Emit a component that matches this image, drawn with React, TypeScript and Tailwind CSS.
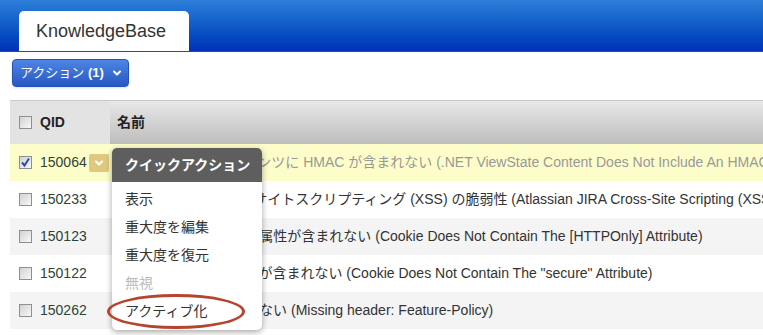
import React from "react";

const rows = [
  { id: "150064", checked: true, name: ".NET ViewStateコンテンツに HMAC が含まれない (.NET ViewState Content Does Not Include An HMAC)", dim: true },
  { id: "150233", name: "Atlassian JIRA クロスサイトスクリプティング (XSS) の脆弱性 (Atlassian JIRA Cross-Site Scripting (XSS) Vulnerability)" },
  { id: "150123", name: "Cookie に [HTTPOnly] 属性が含まれない (Cookie Does Not Contain The [HTTPOnly] Attribute)" },
  { id: "150122", name: "Cookieに \"secure\"属性が含まれない (Cookie Does Not Contain The \"secure\" Attribute)" },
  { id: "150262", name: "必須 HTTP ヘッダーがない (Missing header: Feature-Policy)" },
];

function Checkbox({ checked }: { checked?: boolean }) {
  return (
    <div className="w-[13px] h-[13px] shrink-0 border border-[#8f8f8f] bg-gradient-to-br from-[#d2d2d2] to-[#f8f8f8] flex items-center justify-center">
      {checked && (
        <svg width="11" height="11" viewBox="0 0 11 11">
          <path d="M2 5.5 L4.5 8.5 L9 1.5" stroke="#2b4fa8" strokeWidth="2" fill="none" />
        </svg>
      )}
    </div>
  );
}

function Chevron({ color = "#fff", size = 10 }: { color?: string; size?: number }) {
  return (
    <svg width={size} height={size} viewBox="0 0 10 10">
      <path d="M2 3.5 L5 6.5 L8 3.5" stroke={color} strokeWidth="2" fill="none" strokeLinecap="round" strokeLinejoin="round" />
    </svg>
  );
}

export default function App() {
  return (
    <div
      className="w-[763px] h-[335px] overflow-hidden bg-white relative"
      style={{ fontFamily: '"Liberation Sans", Arial, "Noto Sans CJK JP", sans-serif' }}
    >
      <div className="h-[52px] bg-gradient-to-b from-[#2d7fd9] to-[#0331b7] border-b border-[#1d4bb0] flex items-end pl-[19px]">
        <div className="w-[170px] h-[40px] bg-white rounded-t-[5px] pl-[17px] text-[18px] leading-[40px] text-[#333]">
          KnowledgeBase
        </div>
      </div>
      <div className="pt-[7px] pl-[12px]">
        <button className="w-[117px] h-[28px] rounded-[4px] border border-[#2553b5] bg-gradient-to-b from-[#4d86e3] to-[#2857c4] text-white text-[13px] flex items-center pl-[7px] gap-[8px] shadow-sm">
          <span>アクション <span className="font-bold">(1)</span></span>
          <Chevron />
        </button>
      </div>
      <div className="ml-[10px] mt-[13px] border-t border-[#c8c8c8]">
        <div className="flex h-[43px] text-[14px] font-bold text-[#222]">
          <div className="w-[100px] bg-[#e3e3e3] flex items-center pl-[9px] gap-[8px]">
            <Checkbox />
            <span>QID</span>
          </div>
          <div className="flex-1 bg-gradient-to-b from-[#e8e8e8] to-[#bdbdbd] flex items-center pl-[7px]">名前</div>
        </div>
        {rows.map((r, i) => (
          <div
            key={r.id}
            className={
              "flex h-[37px] items-center text-[14px] whitespace-nowrap " +
              (i === 0 ? "bg-[#fdfdc9]" : i % 2 === 0 ? "bg-[#f4f4f4]" : "bg-white")
            }
          >
            <div className="w-[100px] shrink-0 flex items-center pl-[9px] gap-[8px] text-[#2f4434]">
              <Checkbox checked={r.checked} />
              <span>{r.id}</span>
              {i === 0 && (
                <div className="w-[20px] h-[18px] -ml-[6px] rounded-[2px] bg-[#dfc97e] flex items-center justify-center">
                  <Chevron />
                </div>
              )}
            </div>
            <div className={"pl-[7px] " + (r.dim ? "text-[#999]" : "text-[#333]")}>{r.name}</div>
          </div>
        ))}
      </div>
      <div className="absolute left-[112px] top-[148px] w-[150px] h-[182px] bg-white rounded-[5px] shadow-[0_2px_6px_rgba(0,0,0,0.35)]">
        <div className="h-[34px] bg-[#5e5e5e] rounded-t-[5px] text-white font-bold text-[14px] flex items-center pl-[13px]">
          クイックアクション
        </div>
        <div className="pt-[3px] text-[14px] text-[#333]">
          <div className="h-[28px] flex items-center pl-[13px]">表示</div>
          <div className="h-[28px] flex items-center pl-[13px]">重大度を編集</div>
          <div className="h-[28px] flex items-center pl-[13px]">重大度を復元</div>
          <div className="h-[28px] flex items-center pl-[13px] text-[#bbb]">無視</div>
          <div className="h-[28px] flex items-center pl-[13px]">アクティブ化</div>
        </div>
        <div className="absolute left-[-5px] top-[146px] w-[138px] h-[35px] rounded-[50%] border-[3px] border-[#b5452f]" />
      </div>
    </div>
  );
}
